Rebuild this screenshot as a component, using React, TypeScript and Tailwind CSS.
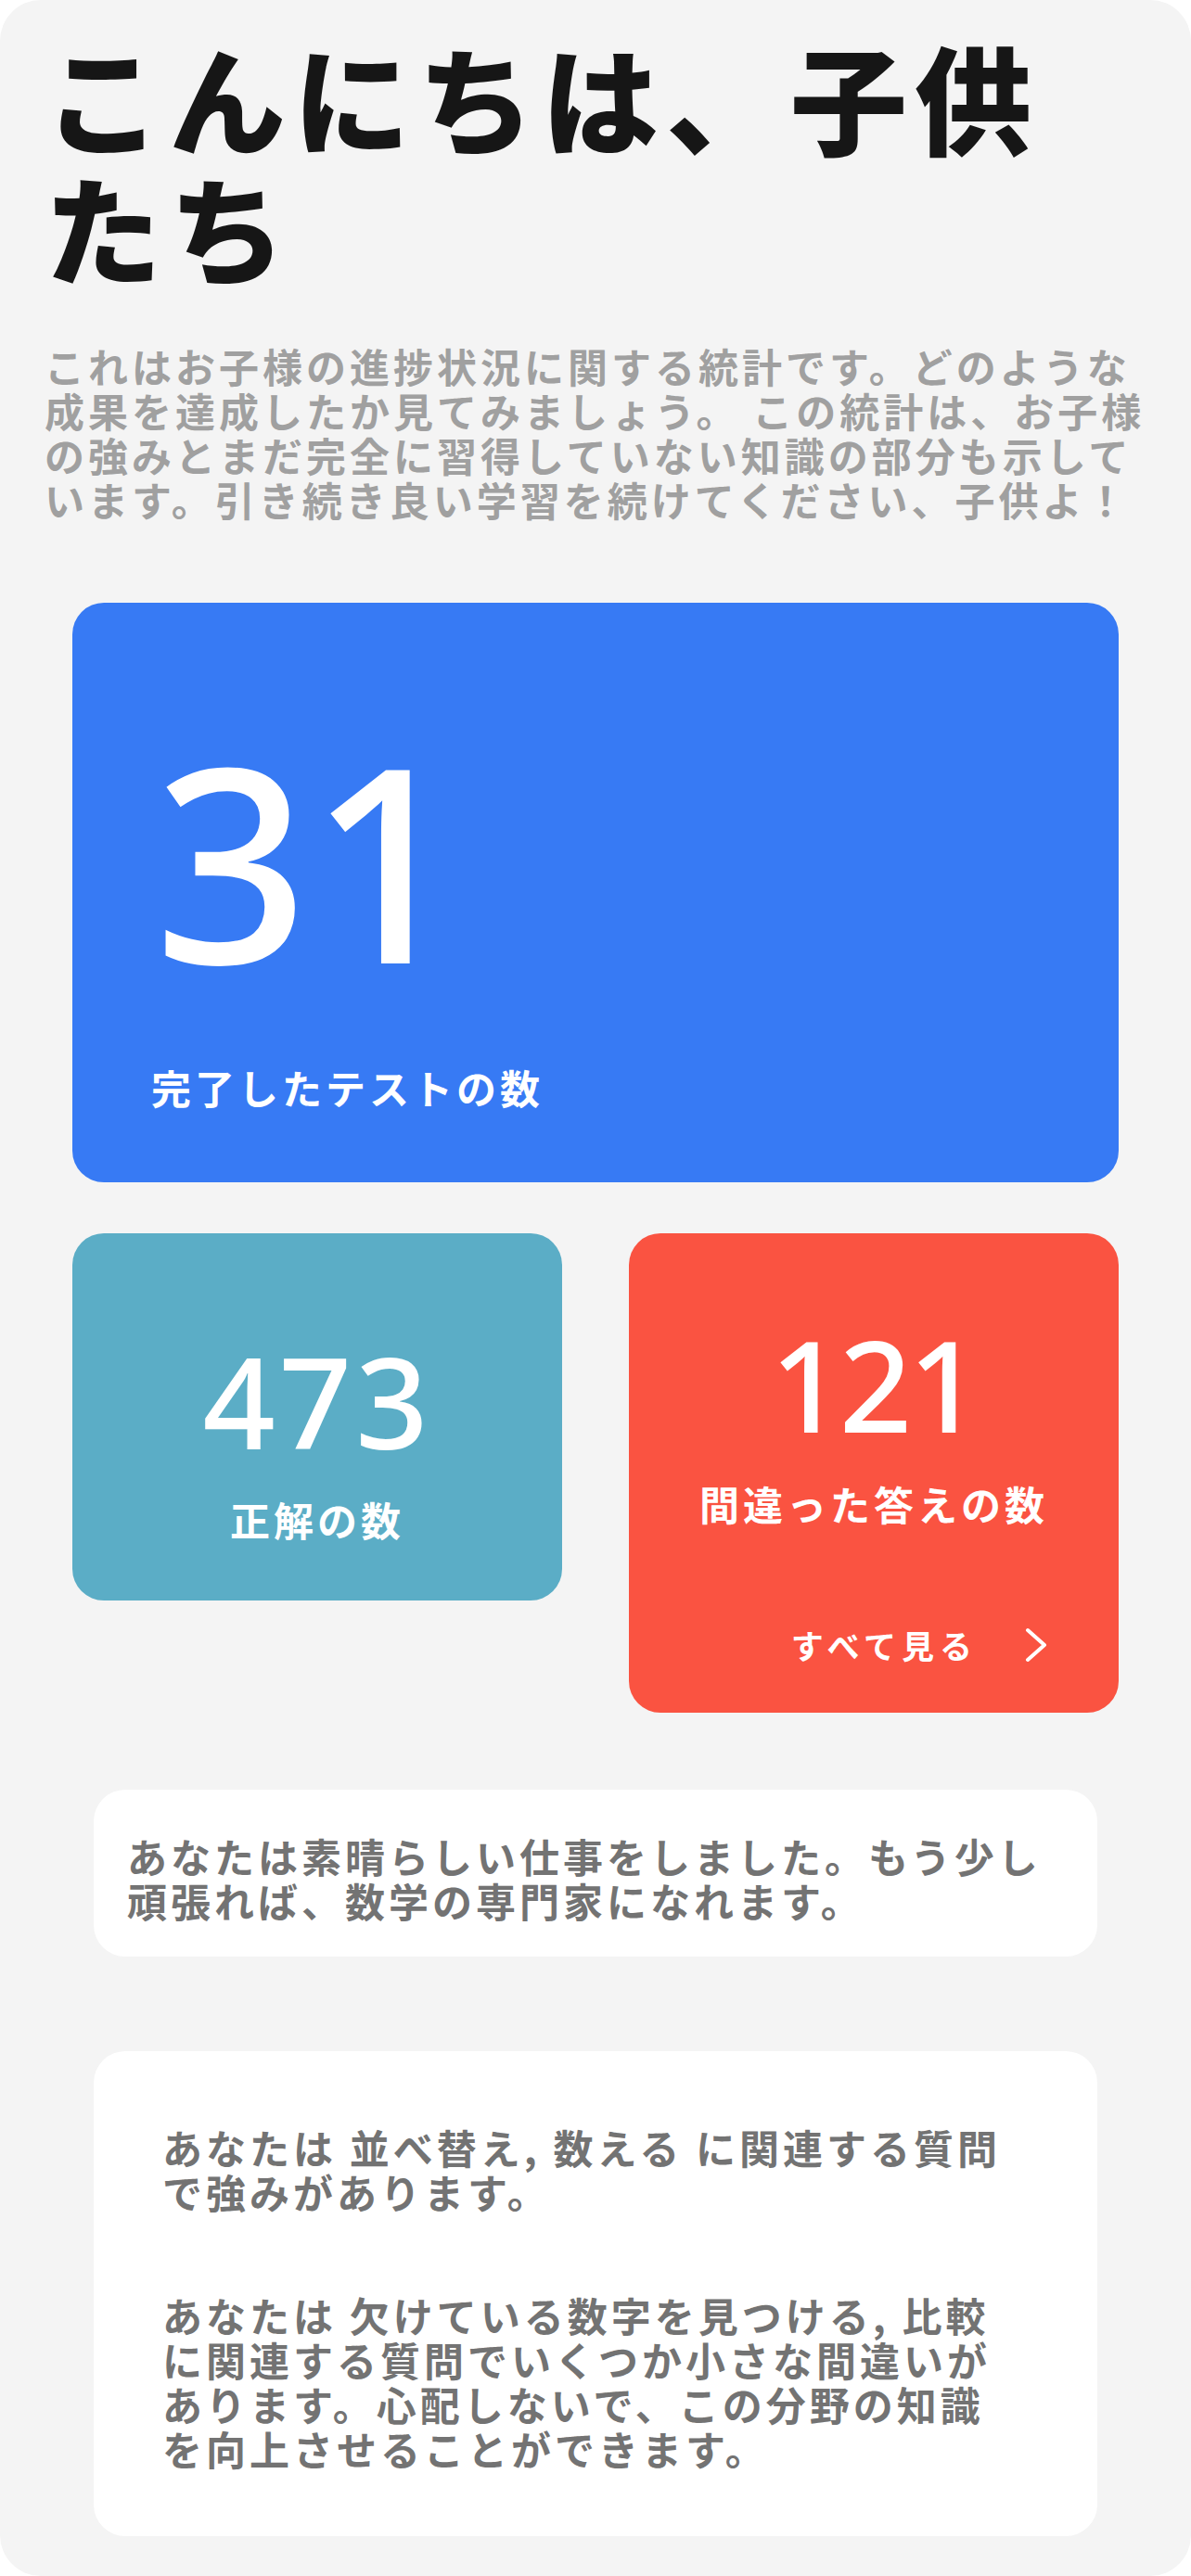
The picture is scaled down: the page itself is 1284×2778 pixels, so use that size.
import React from "react";

const jp = "font-['Noto_Sans_CJK_JP',_'Noto_Sans',_sans-serif]";
const num = "font-['Noto_Sans',_'Inter',_sans-serif]";

function Chevron() {
  return (
    <svg width="26" height="38" viewBox="0 0 26 38" fill="none">
      <polyline points="4,3 22,19 4,35" stroke="#ffffff" strokeWidth="4" strokeLinecap="round" strokeLinejoin="round" />
    </svg>
  );
}

export default function App() {
  return (
    <div className="w-[1284px] bg-white">
      <div className="w-[1284px] h-[2778px] rounded-[44px] bg-[#f4f4f4] pt-[33px] pb-[43px] flex flex-col">
        <h1
          className={`${jp} ml-[48px] w-[1150px] text-[126px] leading-[140px] tracking-[8px] font-black text-[#161616]`}
        >
          こんにちは、子供たち
        </h1>
        <p
          className={`${jp} ml-[48px] mt-[57px] w-[1200px] text-[43px] leading-[48px] tracking-[4px] font-bold text-[#a0a0a0]`}
        >
          これはお子様の進捗状況に関する統計です。どのような成果を達成したか見てみましょう。 この統計は、お子様の強みとまだ完全に習得していない知識の部分も示しています。引き続き良い学習を続けてください、子供よ！
        </p>

        <div className="mx-[78px] mt-[88px] h-[625px] rounded-[34px] bg-[#377af4] pt-[130px] pl-[88px] flex flex-col">
          <div className={`${num} text-[292px] leading-none font-medium text-white`}>31</div>
          <div className={`${jp} -ml-[3px] mt-[76px] text-[43px] leading-[48px] tracking-[4px] font-bold text-white`}>
            完了したテストの数
          </div>
        </div>

        <div className="mx-[78px] mt-[55px] grid grid-cols-2 gap-[72px] items-start">
          <div className="h-[396px] rounded-[34px] bg-[#5badc6] pt-[112px] flex flex-col items-center">
            <div className={`${num} text-[137px] leading-none font-medium tracking-[4px] text-white`}>473</div>
            <div className={`${jp} mt-[35px] text-[43px] leading-[48px] tracking-[4px] font-bold text-white`}>
              正解の数
            </div>
          </div>
          <div className="h-[517px] rounded-[34px] bg-[#fa5341] pt-[94px] flex flex-col">
            <div className={`${num} text-center text-[137px] leading-none font-medium tracking-[-4px] text-white`}>121</div>
            <div className={`${jp} mt-[36px] text-center text-[43px] leading-[48px] tracking-[4px] font-bold text-white`}>
              間違った答えの数
            </div>
            <div className="mt-[109px] pr-[76px] flex justify-end items-center gap-[50px]">
              <span className={`${jp} text-[35px] leading-[40px] tracking-[6px] font-bold text-white`}>すべて見る</span>
              <Chevron />
            </div>
          </div>
        </div>

        <div className="mx-[101px] mt-[83px] h-[180px] rounded-[34px] bg-white pt-[47px] px-[36px]">
          <p className={`${jp} text-[43px] leading-[48px] tracking-[4px] font-bold text-[#737373]`}>
            あなたは素晴らしい仕事をしました。もう少し頑張れば、数学の専門家になれます。
          </p>
        </div>

        <div className="mx-[101px] mt-[102px] h-[523px] rounded-[34px] bg-white pt-[79px] pl-[74px]">
          <div className="w-[920px] flex flex-col gap-[85px]">
            <p className={`${jp} text-[43px] leading-[48px] tracking-[4px] font-bold text-[#737373]`}>
              あなたは 並べ替え, 数える に関連する質問で強みがあります。
            </p>
            <p className={`${jp} text-[43px] leading-[48px] tracking-[4px] font-bold text-[#737373]`}>
              あなたは 欠けている数字を見つける, 比較 に関連する質問でいくつか小さな間違いがあります。心配しないで、この分野の知識を向上させることができます。
            </p>
          </div>
        </div>
      </div>
    </div>
  );
}
